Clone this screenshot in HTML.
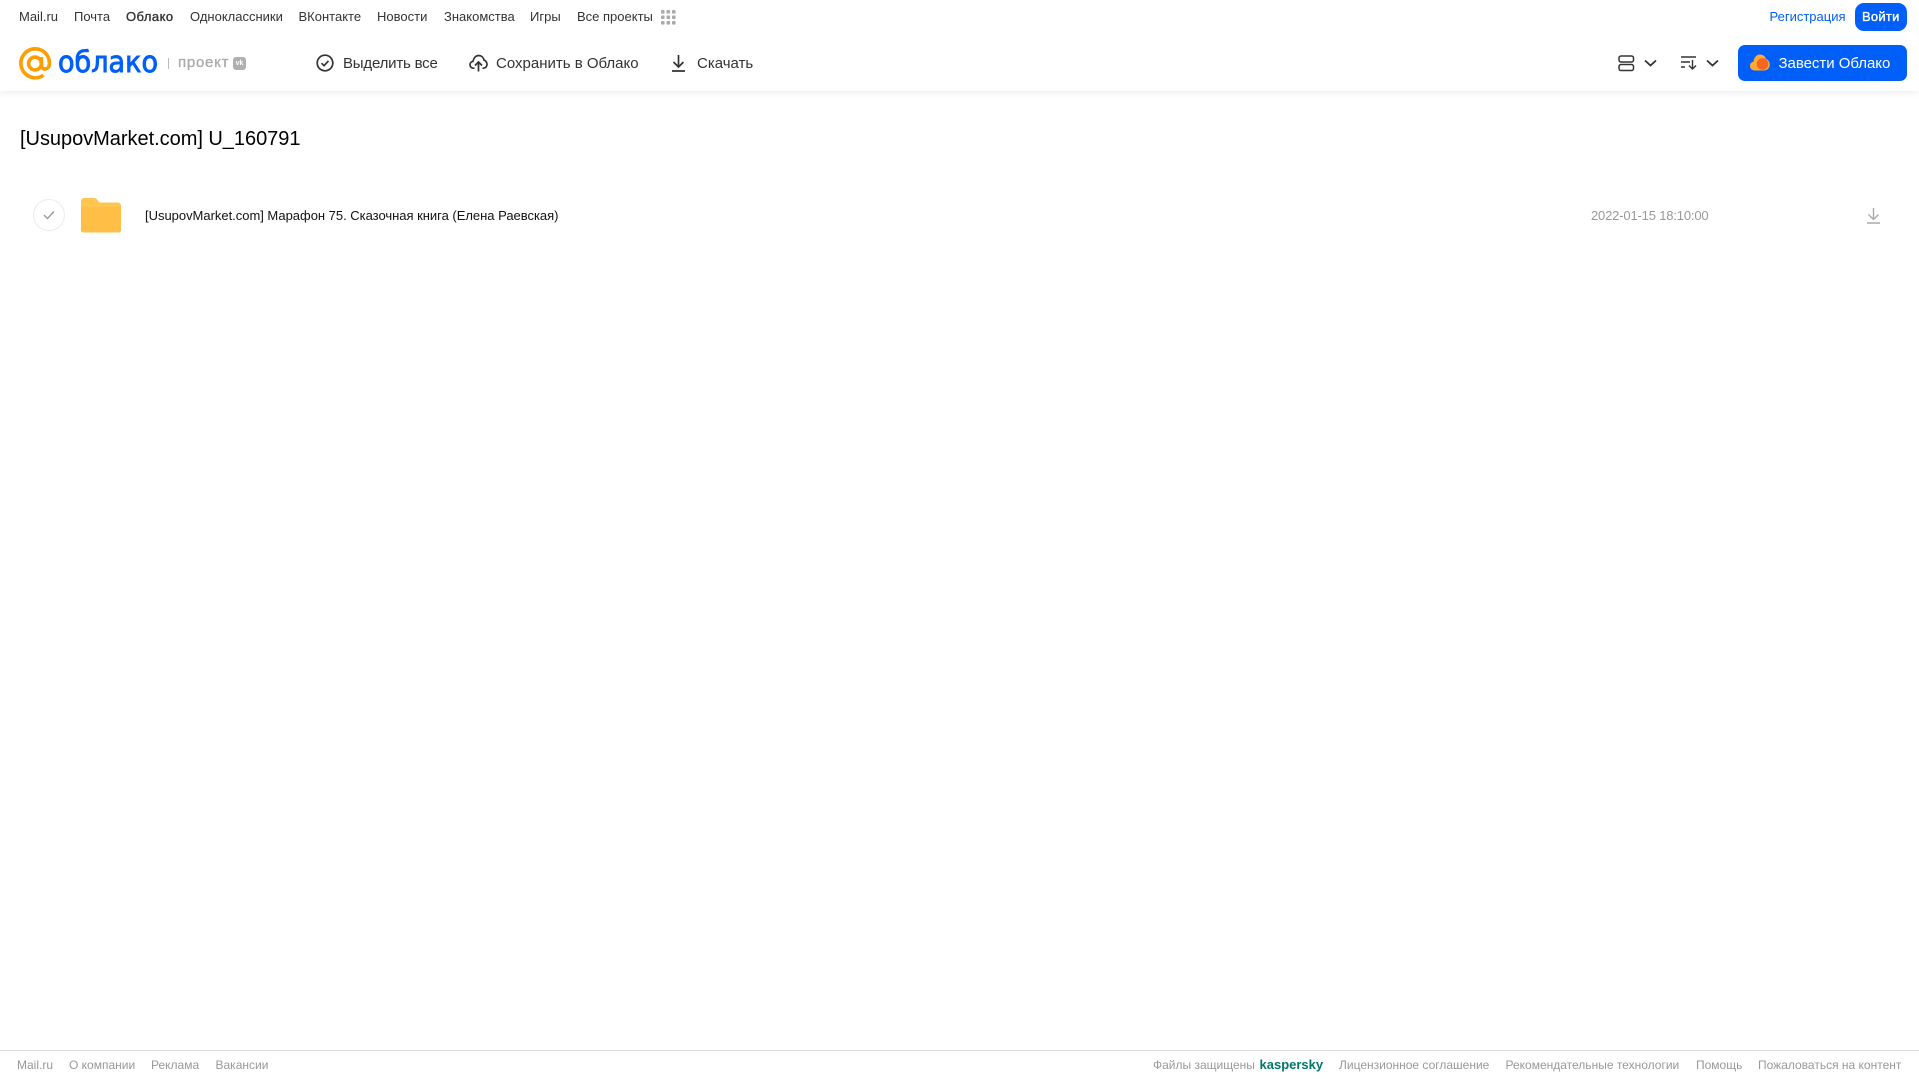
<!DOCTYPE html>
<html lang="ru"><head><meta charset="utf-8"><title>Облако</title>
<style>
html,body{margin:0;padding:0;background:#fff}
body{width:1919px;height:1079px;position:relative;overflow:hidden;font-family:"Liberation Sans",sans-serif}
.t{position:absolute;white-space:nowrap;line-height:20px}
.n{font-size:13px;color:#333;top:7px}
.a{font-size:15px;color:#333;top:53.500px}
.f{font-size:12px;color:#999;top:1055px}
.m{-webkit-text-stroke:.35px currentColor}
svg{position:absolute;overflow:visible}
#hdr{position:absolute;left:0;top:0;width:1919px;height:91px;background:#fff;box-shadow:0 1px 8px rgba(0,0,0,.09)}
</style></head><body>
<div id="hdr"></div>
<span class="t n" style="left:19px">Mail.ru</span>
<span class="t n" style="left:74px">Почта</span>
<span class="t n m" style="left:126px;letter-spacing:.45px">Облако</span>
<span class="t n" style="left:190px">Одноклассники</span>
<span class="t n" style="left:298.500px">ВКонтакте</span>
<span class="t n" style="left:377px">Новости</span>
<span class="t n" style="left:444px">Знакомства</span>
<span class="t n" style="left:530px">Игры</span>
<span class="t n" style="left:577px">Все проекты</span>
<svg style="left:661px;top:10px" width="15" height="15" fill="#aaa"><rect x="0" y="0" width="3.600" height="3.600" rx="1"/><rect x="5.500" y="0" width="3.600" height="3.600" rx="1"/><rect x="11" y="0" width="3.600" height="3.600" rx="1"/><rect x="0" y="5.500" width="3.600" height="3.600" rx="1"/><rect x="5.500" y="5.500" width="3.600" height="3.600" rx="1"/><rect x="11" y="5.500" width="3.600" height="3.600" rx="1"/><rect x="0" y="11" width="3.600" height="3.600" rx="1"/><rect x="5.500" y="11" width="3.600" height="3.600" rx="1"/><rect x="11" y="11" width="3.600" height="3.600" rx="1"/></svg>
<span class="t n" style="left:1769.500px;color:#005ff9">Регистрация</span>
<div style="position:absolute;left:1855px;top:3px;width:52px;height:28px;border-radius:9px;background:#005ff9"></div>
<span class="t n m" style="left:1862px;color:#fff;letter-spacing:.25px">Войти</span>

<svg style="left:19px;top:47px" width="33" height="33" viewBox="0 0 33 33" fill="none" stroke="#ff9e00" stroke-width="3.600"><circle cx="16" cy="16.500" r="6.400"/><path d="M22.400 10v8.500c0 5 7.500 5 8-1.500C30.800 8 24 1.800 16 1.800A14.500 14.500 0 1 0 24.500 28.300"/></svg>
<svg style="left:57px;top:44px" width="102" height="36"><text x="1" y="28" font-family="'DejaVu Sans',sans-serif" font-size="29" font-weight="normal" fill="#005ff9" stroke="#005ff9" stroke-width=".9" textLength="100" lengthAdjust="spacingAndGlyphs">облако</text></svg>
<div style="position:absolute;left:168px;top:58px;width:1px;height:11px;background:#bbb"></div>
<span class="t m" style="left:178px;top:52.500px;font-size:15px;color:#aaa;letter-spacing:.75px">проект</span>
<div style="position:absolute;left:233px;top:57px;width:13px;height:13px;border-radius:3px;background:#b0b0b0;color:#fff;font:bold 7px/13px 'Liberation Sans',sans-serif;text-align:center">vk</div>

<svg style="left:316px;top:54px" width="18" height="18" fill="none" stroke="#333" stroke-width="1.700"><circle cx="9" cy="9" r="7.800"/><path d="M5.500 9.200l2.500 2.500 4.500-4.800"/></svg>
<span class="t a" style="left:343px;letter-spacing:-.2px">Выделить все</span>
<svg style="left:469px;top:54px" width="19" height="18" viewBox="0 0 19 18" fill="none" stroke="#333" stroke-width="1.700"><path d="M5.500 14.200H4.600C2.500 14.200 1 12.700 1 10.800c0-1.800 1.300-3.200 3-3.400C4.500 4 6.800 1.500 9.700 1.500c2.700 0 4.800 2 5.400 4.700 1.700.4 2.900 2.300 2.900 4.200 0 2.100-1.500 3.800-3.500 3.800h-1"/><path d="M9.500 17.500V8.500M6 11.500l3.500-3.500 3.500 3.500"/></svg>
<span class="t a" style="left:496px">Сохранить в Облако</span>
<svg style="left:671px;top:54px" width="15" height="18" fill="none" stroke="#333" stroke-width="1.700"><path d="M7.500 1v11.500M2.500 8l5 5 5-5M1 17h13"/></svg>
<span class="t a" style="left:697px">Скачать</span>

<svg style="left:1618px;top:55px" width="16" height="17" fill="none" stroke="#333" stroke-width="1.500"><rect x="1" y="1" width="14.500" height="6" rx="2"/><rect x="1" y="9.500" width="14.500" height="6" rx="2"/></svg>
<svg style="left:1643.500px;top:59px" width="13" height="8" fill="none" stroke="#333" stroke-width="1.800"><path d="M1 1.500l5.500 5 5.500-5"/></svg>
<svg style="left:1681px;top:55px" width="17" height="16" fill="none" stroke="#333" stroke-width="1.400"><path d="M0 2h15M0 7h9M0 12h4M11.500 5v9M8 10.500l3.500 3.500 3.500-3.500"/></svg>
<svg style="left:1705.500px;top:59px" width="13" height="8" fill="none" stroke="#333" stroke-width="1.800"><path d="M1 1.500l5.500 5 5.500-5"/></svg>
<div style="position:absolute;left:1738px;top:45px;width:169px;height:36px;border-radius:7px;background:#005ff9"></div>
<svg style="left:1750px;top:54px" width="20" height="17"><path d="M5 16.500C2 16.500 0 14.500 0 12c0-2.300 1.500-4 3.500-4.300C4 3.500 6.500.5 10 .5c3 0 5.300 1.800 6 4.500 2.300.7 3.800 2.800 3.800 5.500 0 3.500-2.500 6-5.800 6z" fill="#ffa930"/><circle cx="12.500" cy="10" r="5.800" fill="#f5661f"/></svg>
<span class="t a" style="left:1778.500px;color:#fff;letter-spacing:-.03px">Завести Облако</span>

<span class="t" style="left:20px;top:127px;line-height:24px;font-size:20px;color:#000;letter-spacing:-.03px">[UsupovMarket.com] U_160791</span>

<div style="position:absolute;left:33px;top:199px;width:30px;height:30px;border:1px solid #ececec;border-radius:50%"></div>
<svg style="left:43px;top:210px" width="12" height="10" fill="none" stroke="#999" stroke-width="1.400"><path d="M1 5l3.500 3.500L11 1.500"/></svg>
<svg style="left:81px;top:198px" width="40" height="35"><path d="M0 3a3 3 0 0 1 3-3h9c3 0 4 1 5 3 .6 1.200 1.500 1.500 3 1.500h17a3 3 0 0 1 3 3V32a2.500 2.500 0 0 1-2.500 2.500H2.500A2.500 2.500 0 0 1 0 32z" fill="#ffc54f"/><rect x="0" y="9" width="40" height="25.500" rx="2.500" fill="#ffbe45"/></svg>
<span class="t" style="left:145px;top:206px;font-size:13px;color:#111;letter-spacing:-.02px">[UsupovMarket.com] Марафон 75. Сказочная книга (Елена Раевская)</span>
<span class="t" style="left:1591px;top:206px;font-size:13px;color:#999;letter-spacing:-.17px">2022-01-15 18:10:00</span>
<svg style="left:1865.500px;top:207px" width="15" height="17" fill="none" stroke="#aaa" stroke-width="1.400"><path d="M7.500 1v11M2.500 7.500l5 5 5-5M1 16h13"/></svg>

<div style="position:absolute;left:0;top:1050px;width:1919px;height:1px;background:#d9d9d9"></div>
<span class="t f" style="left:17px">Mail.ru</span>
<span class="t f" style="left:69px">О компании</span>
<span class="t f" style="left:151px">Реклама</span>
<span class="t f" style="left:215.500px">Вакансии</span>
<span class="t f" style="left:1153px">Файлы защищены</span>
<span class="t f" style="left:1259.500px;font-size:13px;font-weight:bold;color:#00776b">kaspersky</span>
<span class="t f" style="left:1339px">Лицензионное соглашение</span>
<span class="t f" style="left:1505.500px">Рекомендательные технологии</span>
<span class="t f" style="left:1696px">Помощь</span>
<span class="t f" style="left:1758px">Пожаловаться на контент</span>
</body></html>
